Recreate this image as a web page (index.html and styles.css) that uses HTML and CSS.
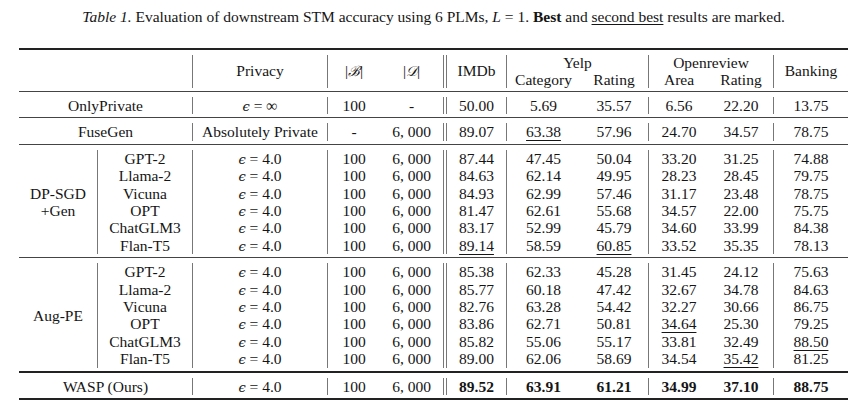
FILE: index.html
```html
<!DOCTYPE html>
<html>
<head>
<meta charset="utf-8">
<link rel="stylesheet" href="styles.css">
</head>
<body>
<div class="page">
<p class="caption"><i>Table 1.</i> Evaluation of downstream STM accuracy using 6 PLMs, <i>L</i> = 1. <b>Best</b> and <u>second best</u> results are marked.</p>
<table class="res">
<colgroup>
<col class="c-grp"><col class="c-model"><col class="c-priv"><col class="c-b"><col class="c-d"><col class="c-imdb"><col class="c-cat"><col class="c-yr"><col class="c-area"><col class="c-orr"><col class="c-bank">
</colgroup>
<tbody>
<tr class="rule top"><td colspan="11"><div class="line"></div></td></tr>
<tr class="hd"><td colspan="2" rowspan="2"></td><td rowspan="2" class="vl">Privacy</td><td rowspan="2" class="vl">|<span class="cal">ℬ</span>|</td><td rowspan="2">|<span class="cal">𝒟</span>|</td><td rowspan="2" class="dl">IMDb</td><td colspan="2" class="vl">Yelp</td><td colspan="2" class="vl">Openreview</td><td rowspan="2" class="vl">Banking</td></tr>
<tr class="hd"><td class="vl">Category</td><td>Rating</td><td class="vl">Area</td><td>Rating</td></tr>
<tr class="rule"><td colspan="11"><div class="line"></div></td></tr>

<tr><td colspan="2">OnlyPrivate</td><td class="vl"><i class="m">ϵ</i> = ∞</td><td class="vl">100</td><td>-</td><td class="dl">50.00</td><td class="vl">5.69</td><td>35.57</td><td class="vl">6.56</td><td>22.20</td><td class="vl">13.75</td></tr>
<tr class="rule"><td colspan="11"><div class="line"></div></td></tr>

<tr><td colspan="2">FuseGen</td><td class="vl">Absolutely Private</td><td class="vl">-</td><td>6, 000</td><td class="dl">89.07</td><td class="vl"><u>63.38</u></td><td>57.96</td><td class="vl">24.70</td><td>34.57</td><td class="vl">78.75</td></tr>
<tr class="rule"><td colspan="11"><div class="line"></div></td></tr>

<tr><td rowspan="6" class="grp">DP-SGD<br>+Gen</td><td class="vl">GPT-2</td><td class="vl"><i class="m">ϵ</i> = 4.0</td><td class="vl">100</td><td>6, 000</td><td class="dl">87.44</td><td class="vl">47.45</td><td>50.04</td><td class="vl">33.20</td><td>31.25</td><td class="vl">74.88</td></tr>
<tr><td class="vl">Llama-2</td><td class="vl"><i class="m">ϵ</i> = 4.0</td><td class="vl">100</td><td>6, 000</td><td class="dl">84.63</td><td class="vl">62.14</td><td>49.95</td><td class="vl">28.23</td><td>28.45</td><td class="vl">79.75</td></tr>
<tr><td class="vl">Vicuna</td><td class="vl"><i class="m">ϵ</i> = 4.0</td><td class="vl">100</td><td>6, 000</td><td class="dl">84.93</td><td class="vl">62.99</td><td>57.46</td><td class="vl">31.17</td><td>23.48</td><td class="vl">78.75</td></tr>
<tr><td class="vl">OPT</td><td class="vl"><i class="m">ϵ</i> = 4.0</td><td class="vl">100</td><td>6, 000</td><td class="dl">81.47</td><td class="vl">62.61</td><td>55.68</td><td class="vl">34.57</td><td>22.00</td><td class="vl">75.75</td></tr>
<tr><td class="vl">ChatGLM3</td><td class="vl"><i class="m">ϵ</i> = 4.0</td><td class="vl">100</td><td>6, 000</td><td class="dl">83.17</td><td class="vl">52.99</td><td>45.79</td><td class="vl">34.60</td><td>33.99</td><td class="vl">84.38</td></tr>
<tr><td class="vl">Flan-T5</td><td class="vl"><i class="m">ϵ</i> = 4.0</td><td class="vl">100</td><td>6, 000</td><td class="dl"><u>89.14</u></td><td class="vl">58.59</td><td><u>60.85</u></td><td class="vl">33.52</td><td>35.35</td><td class="vl">78.13</td></tr>
<tr class="rule"><td colspan="11"><div class="line"></div></td></tr>

<tr><td rowspan="6" class="grp">Aug-PE</td><td class="vl">GPT-2</td><td class="vl"><i class="m">ϵ</i> = 4.0</td><td class="vl">100</td><td>6, 000</td><td class="dl">85.38</td><td class="vl">62.33</td><td>45.28</td><td class="vl">31.45</td><td>24.12</td><td class="vl">75.63</td></tr>
<tr><td class="vl">Llama-2</td><td class="vl"><i class="m">ϵ</i> = 4.0</td><td class="vl">100</td><td>6, 000</td><td class="dl">85.77</td><td class="vl">60.18</td><td>47.42</td><td class="vl">32.67</td><td>34.78</td><td class="vl">84.63</td></tr>
<tr><td class="vl">Vicuna</td><td class="vl"><i class="m">ϵ</i> = 4.0</td><td class="vl">100</td><td>6, 000</td><td class="dl">82.76</td><td class="vl">63.28</td><td>54.42</td><td class="vl">32.27</td><td>30.66</td><td class="vl">86.75</td></tr>
<tr><td class="vl">OPT</td><td class="vl"><i class="m">ϵ</i> = 4.0</td><td class="vl">100</td><td>6, 000</td><td class="dl">83.86</td><td class="vl">62.71</td><td>50.81</td><td class="vl"><u>34.64</u></td><td>25.30</td><td class="vl">79.25</td></tr>
<tr><td class="vl">ChatGLM3</td><td class="vl"><i class="m">ϵ</i> = 4.0</td><td class="vl">100</td><td>6, 000</td><td class="dl">85.82</td><td class="vl">55.06</td><td>55.17</td><td class="vl">33.81</td><td>32.49</td><td class="vl"><u>88.50</u></td></tr>
<tr><td class="vl">Flan-T5</td><td class="vl"><i class="m">ϵ</i> = 4.0</td><td class="vl">100</td><td>6, 000</td><td class="dl">89.00</td><td class="vl">62.06</td><td>58.69</td><td class="vl">34.54</td><td><u>35.42</u></td><td class="vl">81.25</td></tr>
<tr class="rule thick"><td colspan="11"><div class="line"></div></td></tr>

<tr class="ours"><td colspan="2">WASP (Ours)</td><td class="vl"><i class="m">ϵ</i> = 4.0</td><td class="vl">100</td><td>6, 000</td><td class="dl"><b>89.52</b></td><td class="vl"><b>63.91</b></td><td><b>61.21</b></td><td class="vl"><b>34.99</b></td><td><b>37.10</b></td><td class="vl"><b>88.75</b></td></tr>
<tr class="rule bottom"><td colspan="11"><div class="line"></div></td></tr>
</tbody>
</table>
</div>
</body>
</html>
```

FILE: styles.css
```css
body {
  margin: 0;
  background: #fff;
}

.page {
  padding: 8px 0 0 19px;
  width: 829px;
}

.caption {
  margin: 0;
  font-family: "Liberation Serif", "Times New Roman", serif;
  font-size: 15.5px;
  line-height: 18px;
  text-align: center;
  color: #151515;
}

.caption u {
  text-underline-offset: 2px;
}

.res {
  margin-top: 22px;
  width: 829px;
  table-layout: fixed;
  border-collapse: separate;
  border-spacing: 0;
  font-family: "Liberation Serif", "Times New Roman", serif;
  font-size: 15.5px;
  color: #151515;
}

.c-grp { width: 78px; }
.c-model { width: 95px; }
.c-priv { width: 135px; }
.c-b { width: 53px; }
.c-d { width: 63px; }
.c-imdb { width: 63px; }
.c-cat { width: 74px; }
.c-yr { width: 68px; }
.c-area { width: 61px; }
.c-orr { width: 64px; }
.c-bank { width: 75px; }

.res td {
  padding: 0;
  height: 17.4px;
  text-align: center;
  vertical-align: middle;
  line-height: 17.4px;
  white-space: nowrap;
}

.res td.vl {
  border-left: 1px solid #777;
}

.res td.dl {
  border-left: 4px double #777;
}

.res .hd td {
  height: 16.5px;
  line-height: 16.5px;
}

.res u {
  text-underline-offset: 3px;
  text-decoration-thickness: 1px;
}

.res .m {
  font-family: "DejaVu Serif", serif;
  font-size: 13px;
  line-height: 0;
}

.cal {
  font-family: "DejaVu Serif", serif;
  font-style: italic;
  font-size: 14px;
  line-height: 0;
}

.res .rule td {
  height: auto;
  padding: 3px 0 5px;
  line-height: 0;
}

.rule .line {
  height: 1px;
  background: #444;
}

.res .rule.top td {
  padding: 0 0 5px;
}

.rule.top .line,
.rule.thick .line,
.rule.bottom .line {
  height: 2px;
  background: #222;
}

.res .rule.bottom td {
  padding: 3px 0 0;
}
```
